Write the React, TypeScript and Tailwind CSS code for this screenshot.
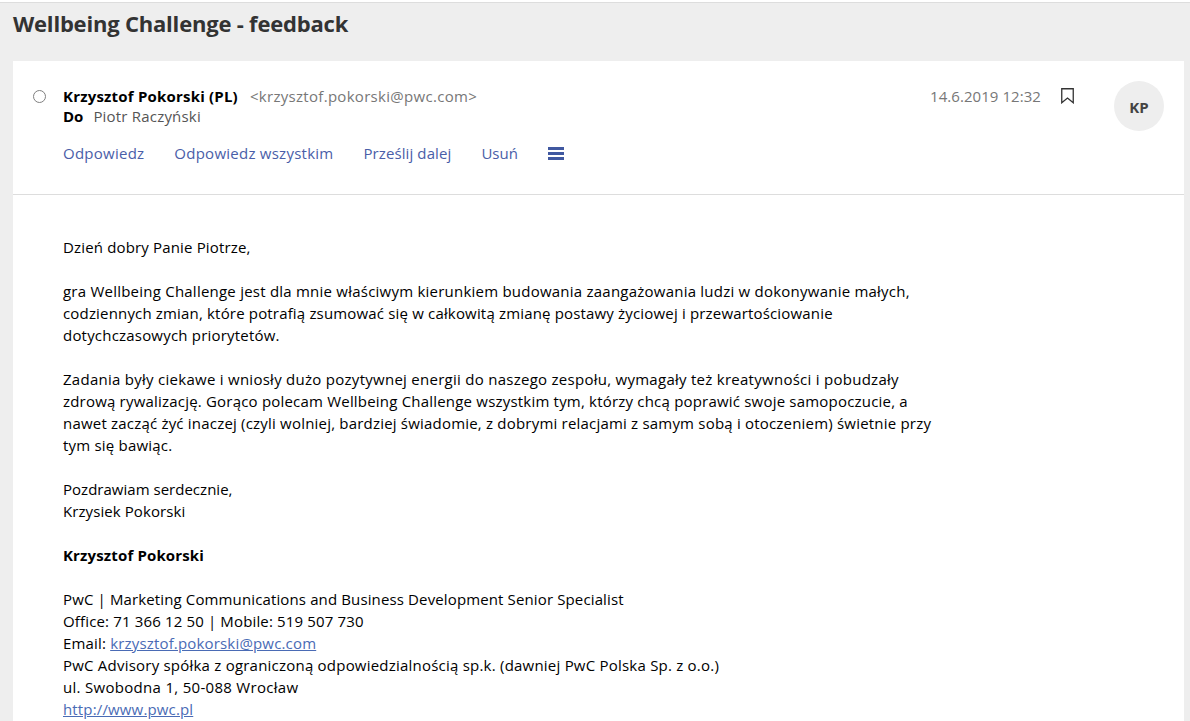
const font = { fontFamily: '"Open Sans", sans-serif' };

const Line = ({ text, className }: { text: string; className: string }) => (
  <span className={`block ${className}`}>{text}</span>
);

const actions = [
  { label: "Odpowiedz", className: "tracking-[0.25px]" },
  { label: "Odpowiedz wszystkim", className: "tracking-[0.25px]" },
  { label: "Prześlij dalej", className: "tracking-[0.1px]" },
  { label: "Usuń", className: "tracking-[0px]" },
];

export default function App() {
  return (
    <div className="flex h-[721px] w-[1190px] flex-col overflow-hidden bg-[#eeeeee]" style={font}>
      <div className="h-[3px] shrink-0 border-b border-[#dddddd] bg-white" />
      <h1 className="h-[58px] shrink-0 pl-[13px] pt-[4px] text-[22px] leading-[32px] font-bold tracking-[-0.2px] text-[#333333]">
        Wellbeing Challenge - feedback
      </h1>
      <div className="ml-[13px] mr-[6px] flex min-h-0 flex-1 flex-col bg-white">
        <header className="flex h-[134px] shrink-0 border-b border-[#dddddd]">
          <div className="pl-[20px] pt-[29px]">
            <div className="h-[13px] w-[13px] rounded-full border border-[#808080]" />
          </div>
          <div className="flex-1 pl-[17px] pt-[24px]">
            <div className="flex items-center text-[15px] leading-[22px]">
              <span className="font-bold tracking-[0.2px] text-black">Krzysztof Pokorski (PL)</span>
              <span className="ml-[12px] tracking-[0.3px] text-[#777777]">&lt;krzysztof.pokorski@pwc.com&gt;</span>
            </div>
            <div className="flex text-[15px] leading-[18px]">
              <span className="font-bold text-black">Do</span>
              <span className="ml-[10px] tracking-[0.2px] text-[#555555]">Piotr Raczyński</span>
            </div>
            <nav className="mt-[18px] flex items-center gap-[30px] text-[15px] leading-[20px] text-[#4a5ea8]">
              {actions.map((a) => (
                <span key={a.label} className={a.className}>
                  {a.label}
                </span>
              ))}
              <svg width="16" height="13" viewBox="0 0 16 13" className="fill-[#4058a0]">
                <rect x="0" y="0" width="16" height="3" />
                <rect x="0" y="5" width="16" height="3" />
                <rect x="0" y="10" width="16" height="3" />
              </svg>
            </nav>
          </div>
          <div className="flex pt-[24px] text-[15px] leading-[22px] tracking-[0.06px] text-[#777777]">
            <span>14.6.2019 12:32</span>
            <svg width="13" height="16" viewBox="0 0 13 16" className="ml-[20px] mt-[3px] fill-none stroke-[#333333]">
              <path d="M.75.75h11.5v14L6.5 10 .75 14.75z" strokeWidth="1.3" />
            </svg>
          </div>
          <div className="ml-[40px] mr-[20px] mt-[20px] flex h-[50px] w-[50px] items-center justify-center rounded-full bg-[#eeeeee] pt-[2px] text-[15px] font-bold text-[#444444]">
            KP
          </div>
        </header>
        <main className="pl-[50px] pt-[41px] text-[15px] leading-[22px] text-black">
          <div className="mb-[22px]">
            <Line text="Dzień dobry Panie Piotrze," className="tracking-[0.16px]" />
          </div>
          <div className="mb-[22px]">
            <Line
              text="gra Wellbeing Challenge jest dla mnie właściwym kierunkiem budowania zaangażowania ludzi w dokonywanie małych,"
              className="tracking-[0.23px]"
            />
            <Line
              text="codziennych zmian, które potrafią zsumować się w całkowitą zmianę postawy życiowej i przewartościowanie"
              className="tracking-[0.17px]"
            />
            <Line text="dotychczasowych priorytetów." className="tracking-[0.2px]" />
          </div>
          <div className="mb-[22px]">
            <Line
              text="Zadania były ciekawe i wniosły dużo pozytywnej energii do naszego zespołu, wymagały też kreatywności i pobudzały"
              className="tracking-[0.27px]"
            />
            <Line
              text="zdrową rywalizację. Gorąco polecam Wellbeing Challenge wszystkim tym, którzy chcą poprawić swoje samopoczucie, a"
              className="tracking-[0.2px]"
            />
            <Line
              text="nawet zacząć żyć inaczej (czyli wolniej, bardziej świadomie, z dobrymi relacjami z samym sobą i otoczeniem) świetnie przy"
              className="tracking-[0.2px]"
            />
            <Line text="tym się bawiąc." className="tracking-[0.2px]" />
          </div>
          <div className="mb-[22px]">
            <Line text="Pozdrawiam serdecznie," className="tracking-[0.02px]" />
            <Line text="Krzysiek Pokorski" className="tracking-[0.08px]" />
          </div>
          <p className="mb-[22px] font-bold tracking-[0.15px]">Krzysztof Pokorski</p>
          <Line
            text="PwC | Marketing Communications and Business Development Senior Specialist"
            className="tracking-[0.13px]"
          />
          <Line text="Office: 71 366 12 50 | Mobile: 519 507 730" className="tracking-[0.15px]" />
          <p className="tracking-[0.17px]">
            Email: <a className="text-[#4a6bb5] underline">krzysztof.pokorski@pwc.com</a>
          </p>
          <Line
            text="PwC Advisory spółka z ograniczoną odpowiedzialnością sp.k. (dawniej PwC Polska Sp. z o.o.)"
            className="tracking-[0.22px]"
          />
          <Line text="ul. Swobodna 1, 50-088 Wrocław" className="tracking-[0.3px]" />
          <p className="tracking-[0.15px]">
            <a className="text-[#4a6bb5] underline">http://www.pwc.pl</a>
          </p>
        </main>
      </div>
    </div>
  );
}
